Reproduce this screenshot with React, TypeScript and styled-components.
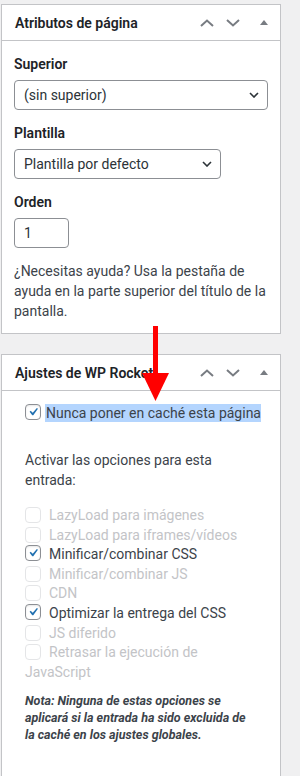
import React from "react";
import styled, { createGlobalStyle } from "styled-components";

const Global = createGlobalStyle`
  html, body { margin: 0; padding: 0; background: #f0f0f1; }
  body {
    font-family: Roboto, "Noto Sans", "Liberation Sans", sans-serif;
    color: #3c434a;
    -webkit-font-smoothing: antialiased;
  }
  * { box-sizing: border-box; }
`;

const Page = styled.div`
  position: relative;
  padding: 4px 0 0 1px;
  width: 300px;
  height: 776px;
  overflow: hidden;
`;

const Postbox = styled.div<{ $tail?: boolean }>`
  width: 280px;
  background: #fff;
  border: 1px solid #c3c4c7;
  margin-bottom: 20px;
  padding-bottom: ${(p) => (p.$tail ? "60px" : "0")};
`;

const Header = styled.div`
  display: flex;
  align-items: center;
  height: 36px;
  border-bottom: 1px solid #c3c4c7;
`;

const Title = styled.h2`
  flex: 1;
  margin: 0;
  padding: 0 0 0 13px;
  font-size: 14px;
  font-weight: 600;
  line-height: 20px;
  color: #1d2327;
  white-space: nowrap;
`;

const Actions = styled.div`
  display: flex;
  align-items: center;
  padding-right: 12px;
`;

const Handle = styled.span<{ $gap: number }>`
  display: flex;
  margin-left: ${(p) => p.$gap}px;
  color: #787c82;
`;

const Inside = styled.div`
  padding: 0 12px 12px 12px;
`;

const Label = styled.p`
  margin: 13px 0 6px;
  font-size: 14px;
  font-weight: 600;
  line-height: 20px;
  color: #1d2327;
`;

const SelectBox = styled.div<{ $w: number }>`
  display: flex;
  align-items: center;
  justify-content: space-between;
  width: ${(p) => p.$w}px;
  height: 30px;
  padding: 0 8px 0 9px;
  border: 1px solid #8c8f94;
  border-radius: 4px;
  background: #fff;
  font-size: 14px;
  color: #2c3338;
`;

const NumberBox = styled.div`
  width: 55px;
  height: 30px;
  display: flex;
  align-items: center;
  padding-left: 9px;
  border: 1px solid #8c8f94;
  border-radius: 4px;
  font-size: 14px;
  color: #2c3338;
`;

const Help = styled.p`
  margin: 13px 0 0;
  font-size: 14px;
  line-height: 20px;
  color: #3c434a;
`;

const RocketInside = styled.div`
  padding: 0 30px 0 23px;
`;

const NeverRow = styled.div`
  margin-top: 12px;
  font-size: 14px;
  line-height: 20px;
  color: #3c434a;
  white-space: nowrap;
`;

const Selected = styled.span`
  background: #b4d5fe;
  padding: 1px 0 1px 1px;
`;

const Intro = styled.p`
  margin: 27px 0 0;
  font-size: 14px;
  line-height: 20px;
  color: #3c434a;
`;

const OptionList = styled.div`
  margin-top: 16px;
`;

const Option = styled.div<{ $disabled?: boolean }>`
  font-size: 14px;
  line-height: 19.6px;
  color: ${(p) => (p.$disabled ? "#c3c4c7" : "#3c434a")};
`;

const Box = styled.span<{ $disabled?: boolean; $gap: number }>`
  display: inline-flex;
  align-items: center;
  justify-content: center;
  width: 16px;
  height: 16px;
  margin-right: ${(p) => p.$gap}px;
  vertical-align: -3px;
  border: 1px solid ${(p) => (p.$disabled ? "#e4e5e7" : "#8c8f94")};
  border-radius: 4px;
  background: #fff;
  box-shadow: ${(p) => (p.$disabled ? "none" : "inset 0 1px 2px rgba(0,0,0,.1)")};
`;

const Note = styled.p`
  margin: 11px 0 0;
  font-size: 12.5px;
  line-height: 16.6px;
  font-weight: 700;
  font-style: italic;
  color: #3c434a;
`;

const ArrowLayer = styled.svg`
  position: absolute;
  left: 140px;
  top: 326px;
  pointer-events: none;
`;

const ChevronUp = () => (
  <svg width="14" height="8" viewBox="0 0 14 8">
    <polyline points="1,7 7,1.5 13,7" fill="none" stroke="currentColor" strokeWidth="2" />
  </svg>
);
const ChevronDown = () => (
  <svg width="14" height="8" viewBox="0 0 14 8">
    <polyline points="1,1 7,6.5 13,1" fill="none" stroke="currentColor" strokeWidth="2" />
  </svg>
);
const Tri = () => (
  <svg width="8" height="5" viewBox="0 0 8 5">
    <polygon points="0,5 4,0 8,5" fill="currentColor" />
  </svg>
);
const SelectArrow = () => (
  <svg width="10" height="6" viewBox="0 0 10 6">
    <polyline points="1,1 5,5 9,1" fill="none" stroke="#2c3338" strokeWidth="1.6" />
  </svg>
);
const Check = () => (
  <svg width="18" height="18" viewBox="0 0 20 20" style={{ margin: "-1px" }}>
    <path d="M14.83 4.89l1.34.94-5.81 8.38H9.02L5.78 9.67l1.34-1.25 2.57 2.4z" fill="#2271b1" />
  </svg>
);

const PanelHeader = ({ title }: { title: string }) => (
  <Header>
    <Title>{title}</Title>
    <Actions>
      <Handle $gap={0}><ChevronUp /></Handle>
      <Handle $gap={12}><ChevronDown /></Handle>
      <Handle $gap={20}><Tri /></Handle>
    </Actions>
  </Header>
);

const options: { label: string; checked?: boolean }[] = [
  { label: "LazyLoad para imágenes" },
  { label: "LazyLoad para iframes/vídeos" },
  { label: "Minificar/combinar CSS", checked: true },
  { label: "Minificar/combinar JS" },
  { label: "CDN" },
  { label: "Optimizar la entrega del CSS", checked: true },
  { label: "JS diferido" },
  { label: "Retrasar la ejecución de JavaScript" },
];

export default function App() {
  return (
    <>
      <Global />
      <Page>
        <Postbox>
          <PanelHeader title="Atributos de página" />
          <Inside>
            <Label>Superior</Label>
            <SelectBox $w={254}>
              <span>(sin superior)</span>
              <SelectArrow />
            </SelectBox>
            <Label>Plantilla</Label>
            <SelectBox $w={207}>
              <span>Plantilla por defecto</span>
              <SelectArrow />
            </SelectBox>
            <Label>Orden</Label>
            <NumberBox>1</NumberBox>
            <Help>¿Necesitas ayuda? Usa la pestaña de ayuda en la parte superior del título de la pantalla.</Help>
          </Inside>
        </Postbox>
        <Postbox $tail>
          <PanelHeader title="Ajustes de WP Rocket" />
          <RocketInside>
            <NeverRow>
              <Box $gap={4}><Check /></Box>
              <Selected>Nunca poner en caché esta página</Selected>
            </NeverRow>
            <Intro>Activar las opciones para esta entrada:</Intro>
            <OptionList>
              {options.map((o) => (
                <Option key={o.label} $disabled={!o.checked}>
                  <Box $gap={8} $disabled={!o.checked}>{o.checked && <Check />}</Box>
                  {o.label}
                </Option>
              ))}
            </OptionList>
            <Note>Nota: Ninguna de estas opciones se aplicará si la entrada ha sido excluida de la caché en los ajustes globales.</Note>
          </RocketInside>
        </Postbox>
        <ArrowLayer width="32" height="76" viewBox="0 0 32 76">
          <rect x="13" y="0" width="5" height="48" fill="#f00" />
          <polygon points="2,47 29,47 15.5,75" fill="#f00" />
        </ArrowLayer>
      </Page>
    </>
  );
}
